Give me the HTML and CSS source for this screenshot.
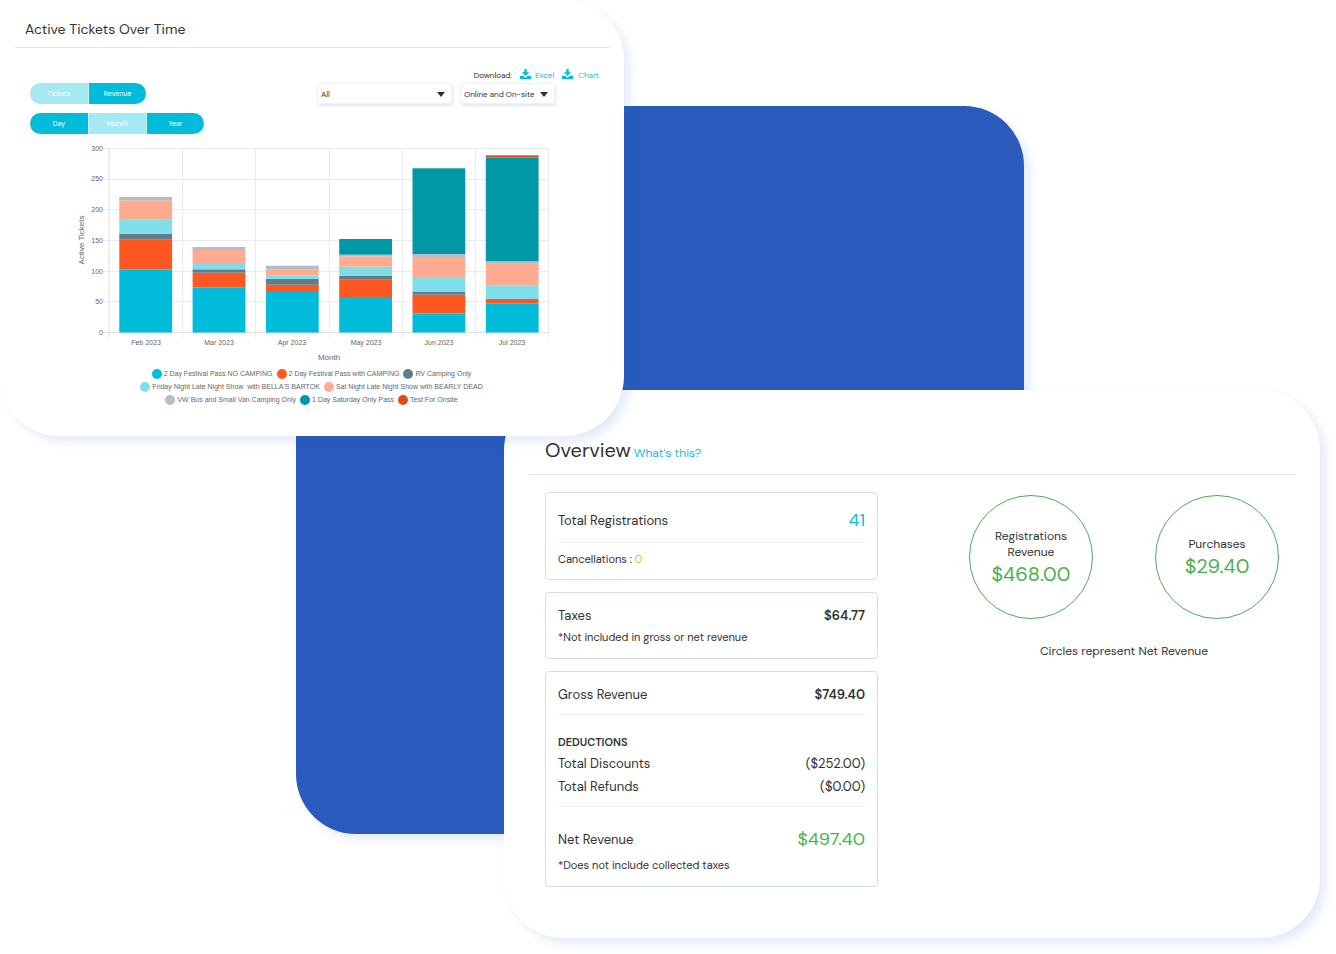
FILE: index.html
```html
<!DOCTYPE html>
<html lang="en">
<head>
<meta charset="utf-8">
<meta name="viewport" content="width=device-width, initial-scale=1">
<title>Reports</title>
<link rel="stylesheet" href="styles.css">
</head>
<body>
<main class="stage">
  <div class="backdrop"></div>

  <section class="card overview">
    <header class="overview-head">
      <h2 class="overview-title">Overview</h2>
      <a class="link" href="#">What's this?</a>
    </header>
    <div class="overview-body">
      <div class="boxes">
        <div class="box box-registrations">
          <div class="row"><span>Total Registrations</span><span class="figure cyan">41</span></div>
          <p class="note ruled">Cancellations : <span class="amber">0</span></p>
        </div>
        <div class="box box-taxes">
          <div class="row"><span>Taxes</span><strong>$64.77</strong></div>
          <p class="note">*Not included in gross or net revenue</p>
        </div>
        <div class="box box-revenue">
          <div class="row"><span>Gross Revenue</span><strong>$749.40</strong></div>
          <div class="deductions">
            <h3 class="deductions-title">DEDUCTIONS</h3>
            <div class="row"><span>Total Discounts</span><span>($252.00)</span></div>
            <div class="row"><span>Total Refunds</span><span>($0.00)</span></div>
          </div>
          <div class="row net"><span>Net Revenue</span><span class="figure green">$497.40</span></div>
          <p class="note">*Does not include collected taxes</p>
        </div>
      </div>
      <div class="circles">
        <div class="circle-row">
          <div class="circle"><span>Registrations<br>Revenue</span><span class="figure green">$468.00</span></div>
          <div class="circle"><span>Purchases</span><span class="figure green">$29.40</span></div>
        </div>
        <p class="caption">Circles represent Net Revenue</p>
      </div>
    </div>
  </section>

  <section class="card tickets">
    <h2 class="tickets-title">Active Tickets Over Time</h2>
    <div class="controls">
      <div class="toggles">
        <div class="toggle">
          <button type="button" class="active">Tickets</button><button type="button">Revenue</button>
        </div>
        <div class="toggle">
          <button type="button">Day</button><button type="button" class="active">Month</button><button type="button">Year</button>
        </div>
      </div>
      <div class="filters">
        <div class="downloads">
          <span>Download:</span>
          <a class="download" href="#"><svg class="icon" viewBox="0 0 12 11" aria-hidden="true"><path d="M4.700 0h2.600v3.500H10L6 7.600 2 3.500h2.700zM0 7.300h3.400L6 9.500l2.600-2.200H12V11H0z"/></svg>Excel</a>
          <a class="download" href="#"><svg class="icon" viewBox="0 0 12 11" aria-hidden="true"><path d="M4.700 0h2.600v3.500H10L6 7.600 2 3.500h2.700zM0 7.300h3.400L6 9.500l2.600-2.200H12V11H0z"/></svg>Chart</a>
        </div>
        <div class="selects">
          <label class="select select-wide"><select aria-label="Ticket type"><option>All</option></select></label>
          <label class="select"><select aria-label="Sales channel"><option>Online and On-site</option></select></label>
        </div>
      </div>
    </div>
    <svg class="chart" viewBox="0 0 480 220" role="img" aria-label="Active tickets by month">
      <g class="grid">
        <path d="M28 6.500H474M28 37.500H474M28 67.500H474M28 98.500H474M28 129.500H474M28 159.500H474"/>
        <path d="M107.500 6V196M180.500 6V196M254.500 6V196M327.500 6V196M400.500 6V196M473.500 6V196"/>
        <path class="axis" d="M34 6V196M28 190.500H474"/>
      </g>
      <g class="ticks-y">
        <text x="28" y="9">300</text><text x="28" y="39">250</text><text x="28" y="70">200</text><text x="28" y="101">150</text><text x="28" y="132">100</text><text x="28" y="162">50</text><text x="28" y="193">0</text>
      </g>
      <g id="bars"></g>
      <g class="ticks-x">
        <text x="71" y="203">Feb 2023</text><text x="144" y="203">Mar 2023</text><text x="217" y="203">Apr 2023</text><text x="291" y="203">May 2023</text><text x="364" y="203">Jun 2023</text><text x="437" y="203">Jul 2023</text>
      </g>
      <text class="axis-title" x="254" y="218">Month</text>
      <text class="axis-title" transform="translate(9 98) rotate(-90)">Active Tickets</text>
    </svg>
    <div class="legend">
      <div class="legend-row"><span class="key c1">2 Day Festival Pass NO CAMPING</span><span class="key c2">2 Day Festival Pass with CAMPING</span><span class="key c3">RV Camping Only</span></div>
      <div class="legend-row"><span class="key c4">Friday Night Late Night Show&nbsp; with BELLA'S BARTOK</span><span class="key c5">Sat Night Late Night Show with BEARLY DEAD</span></div>
      <div class="legend-row"><span class="key c6">VW Bus and Small Van Camping Only</span><span class="key c7">1 Day Saturday Only Pass</span><span class="key c8">Test For Onsite</span></div>
    </div>
  </section>
</main>
<script src="chart.js"></script>
</body>
</html>
```
FILE: styles.css
```css
* { box-sizing: border-box; }

body {
  margin: 0;
  background: #fff;
  color: #2f3133;
  font-family: "DM Sans", Inter, "Open Sans", sans-serif;
}

h2, h3, p { margin: 0; font-weight: 400; }
a { color: #12bdd9; text-decoration: none; }
strong { font-weight: 600; }

/* Overlapping panels share one grid. */
.stage {
  display: grid;
  grid-template-columns: 296fr 208fr 120fr 400fr 296fr 16px;
  grid-template-rows: minmax(106px, auto) minmax(284px, auto) minmax(46px, auto) minmax(398px, auto) minmax(104px, auto);
  padding-bottom: 16px;
}

.backdrop, .card {
  border-radius: 60px;
  box-shadow: 6px 6px 10px rgba(41, 90, 188, .12);
}

.backdrop {
  grid-area: 2 / 2 / 5 / 5;
  background: #295abc;
}

.card { background: #fff; }

/* Tickets card */
.tickets {
  grid-area: 1 / 1 / 4 / 4;
  padding: 12px 14px 0 15px;
}

.tickets-title {
  padding: 0 10px;
  border-bottom: 1px solid #e1e7e8;
  font-size: 14px;
  line-height: 35px;
}

.controls {
  display: flex;
  justify-content: space-between;
  padding: 19px 11px 0 15px;
}

.toggles {
  display: flex;
  flex-direction: column;
  gap: 9px;
  padding-top: 16px;
}

.toggle { display: flex; }

.toggle button {
  width: 58px;
  height: 21px;
  padding: 0;
  border: 0;
  background: #00bcdb;
  color: #fff;
  font: 7px/21px "DM Sans", Inter, sans-serif;
}
.toggle button.active { background: #a5e9f2; }
.toggle button + button { border-left: 1px solid #d3f4f8; }
.toggle button:first-child { border-radius: 11px 0 0 11px; }
.toggle button:last-child { border-radius: 0 11px 11px 0; }

.downloads {
  display: flex;
  justify-content: flex-end;
  align-items: center;
  gap: 8px;
  height: 16px;
  font-size: 8px;
}
.download { display: flex; align-items: center; gap: 4px; }
.download + .download { gap: 5px; }
.icon { width: 11px; height: 10px; margin-bottom: 3px; fill: #00bcdb; }

.selects { display: flex; gap: 8px; padding-right: 44px; }

.select {
  position: relative;
  width: 95px;
}
.select-wide { width: 135px; }
.select select {
  display: block;
  width: 100%;
  height: 21px;
  padding: 0 0 0 3px;
  border: 1px solid #f0f2f5;
  border-radius: 3px;
  background: #fff;
  box-shadow: 1px 2px 3px rgba(41, 90, 188, .15);
  color: #2f3133;
  font: 8px "DM Sans", Inter, sans-serif;
  appearance: none;
}
.select::after {
  content: "";
  position: absolute;
  top: 9px;
  right: 7px;
  border: 4px solid transparent;
  border-top: 5px solid #2f3133;
  border-bottom: 0;
}

.chart {
  display: block;
  width: 480px;
  height: 220px;
  margin: 8px 0 0 60px;
  font-family: "Liberation Sans", Arial, sans-serif;
  font-size: 7px;
  fill: #666;
}
.grid { fill: none; stroke: #ebebeb; }
.axis { stroke: #dedede; }
.ticks-y { text-anchor: end; }
.ticks-x, .axis-title { text-anchor: middle; }
.axis-title { font-size: 8px; }

.c1 { --c: #00bcdb; }
.c2 { --c: #ff5722; }
.c3 { --c: #607d8b; }
.c4 { --c: #80deea; }
.c5 { --c: #ffab91; }
.c6 { --c: #b0bec5; }
.c7 { --c: #0097a7; }
.c8 { --c: #e64a19; }
rect { fill: var(--c); }

.legend {
  padding: 5px 2px 0 0;
  color: #666;
  font: 7px/13px "Liberation Sans", Arial, sans-serif;
}
.legend-row { display: flex; justify-content: center; gap: 4px; }
.key { display: flex; align-items: center; gap: 2px; }
.key::before {
  content: "";
  width: 10px;
  height: 10px;
  border-radius: 50%;
  background: var(--c);
}

/* Overview card */
.overview {
  grid-area: 3 / 3 / 6 / 6;
  padding: 44px 24px 51px 25px;
}

.overview-head {
  display: flex;
  align-items: baseline;
  gap: 3px;
  padding: 0 16px;
  border-bottom: 1px solid #d9e2e6;
  line-height: 32px;
  height: 41px;
}
.overview-title { font-size: 20px; }
.link { font-size: 12px; }

.overview-body {
  display: grid;
  grid-template-columns: 333fr 310fr;
  gap: 91px;
  padding: 17px 17px 0 16px;
}

.boxes { display: flex; flex-direction: column; gap: 12px; }

.box {
  padding: 11px 12px;
  border: 1px solid #d5dfe1;
  border-radius: 4px;
  font-size: 13px;
}
.row {
  display: flex;
  justify-content: space-between;
  align-items: center;
  line-height: 23px;
}
.note { font-size: 11px; line-height: 20px; }
.figure { font-size: 18px; }
.cyan { color: #12bdd9; }
.green { color: #4caf50; }
.amber { color: #f0b440; }

.box-registrations { padding: 16px 12px 10px; }
.ruled { margin-top: 10px; padding-top: 6px; border-top: 1px solid #eef1f2; }
.box-revenue { padding-bottom: 11px; }

.deductions {
  margin: 8px 0 21px;
  padding: 18px 0 8px;
  border: solid #eef1f2;
  border-width: 1px 0;
}
.deductions-title { font-size: 11px; font-weight: 600; line-height: 19px; }
.net { margin-bottom: 4px; }

.circles { padding-top: 3px; text-align: center; font-size: 12px; }
.circle-row { display: flex; justify-content: space-between; }
.circle {
  display: flex;
  flex-direction: column;
  justify-content: center;
  width: 124px;
  height: 124px;
  padding-top: 2px;
  border: 1px solid #4caf50;
  border-radius: 50%;
  line-height: 16px;
}
.circle .figure { font-size: 20px; line-height: 29px; }
.caption { padding-top: 23px; line-height: 18px; }
```
FILE: chart.js
```js
// Each series of stacked edges runs from the baseline upwards.
const BASE = 190.5;
const months = [
  [[1, 127.3], [2, 97.7], [3, 91.7], [4, 77.7], [5, 58.3], [6, 55]],
  [[1, 145.3], [2, 130.7], [3, 127.3], [4, 121], [5, 108], [6, 105]],
  [[1, 150], [2, 142.7], [3, 136.7], [4, 133.3], [5, 127.3], [6, 123.7]],
  [[1, 155], [2, 137.7], [3, 134], [4, 124.7], [5, 114.3], [6, 112.7], [7, 97]],
  [[1, 171.3], [2, 152.7], [3, 150], [4, 135], [5, 115], [6, 112], [7, 26.3]],
  [[1, 161.7], [2, 157], [4, 143.3], [5, 121], [6, 119.3], [7, 15.5], [8, 13.3]]
];
const bars = document.getElementById("bars");
months.forEach((edges, i) => {
  let bottom = BASE;
  edges.forEach(([series, top]) => {
    const bar = document.createElementNS("http://www.w3.org/2000/svg", "rect");
    bar.setAttribute("class", "c" + series);
    bar.setAttribute("x", 44.3 + i * 73.3);
    bar.setAttribute("y", top);
    bar.setAttribute("width", 52.8);
    bar.setAttribute("height", bottom - top);
    bars.append(bar);
    bottom = top;
  });
});
```
